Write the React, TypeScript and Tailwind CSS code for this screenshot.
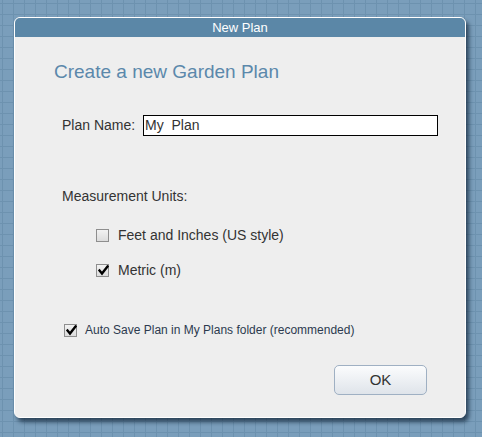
export default function App() {
  return (
    <div className="h-[437px] w-[482px] overflow-hidden bg-[#7a9ebb] bg-[linear-gradient(to_right,#6d92af_1px,transparent_1px),linear-gradient(to_bottom,#6d92af_1px,transparent_1px)] bg-[size:11px_11px] bg-[position:2px_3px] pl-[14px] pt-[17px] font-['Liberation_Sans',Arial,sans-serif]">
      <div className="flex h-[401px] w-[452px] flex-col overflow-hidden rounded-[6px] border border-white bg-[#eeeeee] shadow-[3px_4px_4px_rgba(20,40,60,0.75)]">
        {/* Title bar */}
        <div className="flex h-[19px] shrink-0 items-center justify-center bg-[#5b87a7] text-[13px] leading-none text-white">
          New Plan
        </div>

        <div className="flex flex-1 flex-col">
          <h1 className="ml-[39px] mt-[24px] h-[22px] text-[19px] leading-[22px] text-[#5b88ab]">
            Create a new Garden Plan
          </h1>

          {/* Plan name */}
          <div className="mt-[32px] flex h-[21px] items-center">
            <label className="ml-[47px] w-[81px] text-[14px] text-[#333333]">Plan Name:</label>
            <div className="flex h-[21px] w-[295px] items-center border border-black bg-white pl-[1px] text-[14px] text-[#333333] whitespace-pre">
              My  Plan
            </div>
          </div>

          <div className="ml-[47px] mt-[51px] flex h-[18px] items-center text-[14px] text-[#333333]">
            Measurement Units:
          </div>

          <CheckRow className="ml-[81px] mt-[21px]" label="Feet and Inches (US style)" />
          <CheckRow className="ml-[81px] mt-[17px]" label="Metric (m)" checked />

          <div className="ml-[49px] mt-[42px] flex h-[18px] items-center gap-[8px] text-[12px] text-[#2c3a4e]">
            <Box checked />
            <span>Auto Save Plan in My Plans folder (recommended)</span>
          </div>

          <div className="mt-[26px] flex justify-end pr-[38px]">
            <button className="h-[30px] w-[93px] rounded-[5px] border border-[#9fb0c3] bg-[linear-gradient(to_bottom,#fbfcfd,#dfe4ea)] text-[15px] text-[#333333]">
              OK
            </button>
          </div>
        </div>
      </div>
    </div>
  )
}

function CheckRow({ label, checked, className }: { label: string; checked?: boolean; className?: string }) {
  return (
    <div className={`flex h-[18px] items-center gap-[9px] text-[14px] text-[#333333] ${className ?? ''}`}>
      <Box checked={checked} />
      <span>{label}</span>
    </div>
  )
}

function Box({ checked }: { checked?: boolean }) {
  return (
    <div className="relative h-[13px] w-[13px] shrink-0 border border-[#8e8e8e] bg-[linear-gradient(to_bottom,#f2f2f2,#dcdcdc)]">
      {checked && (
        <svg className="absolute left-[1px] top-[0px]" width="11" height="11" viewBox="0 0 11 11" fill="none">
          <path d="M1.5 5.5 L4 8.5 L9.5 1.5" stroke="#000" strokeWidth="2.4" strokeLinecap="square" />
        </svg>
      )}
    </div>
  )
}
